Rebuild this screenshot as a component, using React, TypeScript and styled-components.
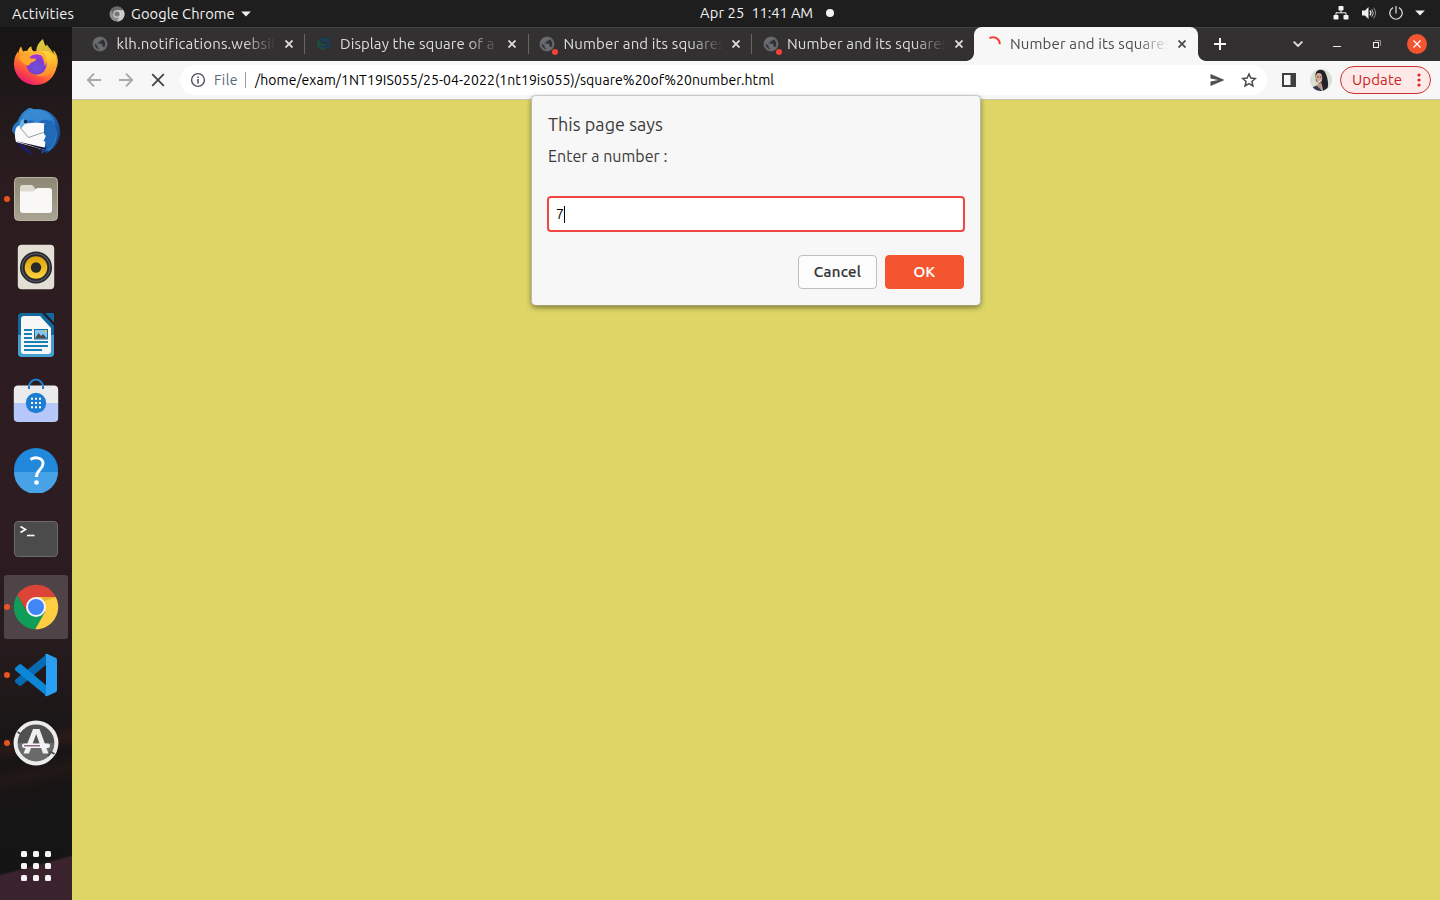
import React from "react";
import styled, { createGlobalStyle, css } from "styled-components";

const GlobalStyle = createGlobalStyle`
  *, *::before, *::after { box-sizing: border-box; }
  html, body { margin: 0; padding: 0; height: 100%; overflow: hidden; }
  body { font-family: "Ubuntu", "Noto Sans", "Open Sans", sans-serif; }
  button { font-family: inherit; padding: 0; margin: 0; border: 0; background: none; }
  svg { display: block; flex: none; }
`;

const Desktop = styled.div`
  display: grid;
  grid-template: 27px 873px / 72px 1368px;
  width: 1440px;
  height: 900px;
  overflow: hidden;
`;

/* ---------- Top bar ---------- */

const TopBar = styled.header`
  grid-column: 1 / -1;
  display: grid;
  grid-template-columns: 688px 1fr auto;
  align-items: center;
  background: #1e1e1e;
  color: #f2f2f2;
  font-size: 14.67px;
  line-height: 26px;
  padding: 0 15px 0 12px;
`;

const Label = styled.span<{ $track?: number }>`
  letter-spacing: ${(p) => p.$track ?? 0}px;
  white-space: pre;
`;

const BarLeft = styled.div`
  display: flex;
  align-items: center;
`;

const AppMenu = styled.div`
  display: flex;
  align-items: center;
  margin-left: 35px;
  gap: 6px;
`;

const Clock = styled.div`
  display: flex;
  align-items: center;
  gap: 7px;
  padding-bottom: 1px;
`;

const Dot = styled.i`
  width: 8px;
  height: 8px;
  border-radius: 50%;
  background: #f2f2f2;
  margin-left: 6px;
`;

const Tray = styled.div`
  display: flex;
  align-items: center;
  justify-content: flex-end;
  gap: 12px;
  padding-bottom: 1px;
`;

/* ---------- Dock ---------- */

const Dock = styled.nav`
  display: flex;
  flex-direction: column;
  align-items: center;
  gap: 4px;
  padding-top: 4px;
  background:
    linear-gradient(165deg, transparent 94.9%, #3b232d 95.2%),
    linear-gradient(168deg, transparent 80%, #2a1a1a 81.5%, #171414 83%, #211817 85%, #161414 87%, transparent 90%),
    linear-gradient(#171515 0, #241a1c 100px, #2c1c20 170px, #2d1c21 520px, #241a1c 640px, #171515 720px, #151414 100%);
`;

const DockItem = styled.div<{ $active?: boolean; $running?: boolean; $lift?: number }>`
  position: relative;
  display: flex;
  align-items: center;
  justify-content: center;
  width: 64px;
  height: 64px;
  padding-bottom: ${(p) => (p.$lift ?? 0) * 2}px;
  border-radius: 3px;
  background: ${(p) => (p.$active ? "#4e4447" : "transparent")};
  ${(p) =>
    p.$running &&
    css`
      &::before {
        content: "";
        position: absolute;
        left: 0;
        top: 29px;
        width: 6px;
        height: 6px;
        border-radius: 50%;
        background: #e95420;
      }
    `}
`;

const AppsButton = styled.div`
  display: grid;
  grid-template-columns: repeat(3, 6px);
  grid-auto-rows: 6px;
  gap: 6px;
  margin-top: auto;
  margin-bottom: 19px;
`;

const AppsDot = styled.i`
  border-radius: 1.5px;
  background: #f5f3f3;
`;

/* ---------- Browser ---------- */

const Browser = styled.main`
  position: relative;
  display: flex;
  flex-direction: column;
  background: #ded566;
`;

const TabStrip = styled.div`
  display: flex;
  align-items: stretch;
  height: 34px;
  padding-left: 8.9px;
  background: #333031;
  box-shadow: inset 0 1px #454243;
`;

const Tab = styled.div<{ $active?: boolean; $divider?: boolean }>`
  position: relative;
  display: flex;
  align-items: center;
  width: 223.5px;
  flex: none;
  padding: 0 7.5px 0 11.6px;
  color: ${(p) => (p.$active ? "#4a4a4a" : "#dedddd")};
  font-size: 15px;
  ${(p) =>
    p.$divider &&
    css`
      &::after {
        content: "";
        position: absolute;
        right: -0.9px;
        top: 7px;
        width: 1px;
        height: 20px;
        background: #666364;
      }
    `}
  ${(p) =>
    p.$active &&
    css`
      width: 224px;
      margin-left: -0.9px;
      padding: 0 8px 0 12px;
      background: #f7f7f7;
      border-radius: 8px 8px 0 0;
      &::before,
      &::after {
        content: "";
        position: absolute;
        bottom: 0;
        width: 8px;
        height: 8px;
      }
      &::before {
        right: 100%;
        background: radial-gradient(circle at 0 0, transparent 7.5px, #f7f7f7 8.2px);
      }
      &::after {
        left: 100%;
        background: radial-gradient(circle at 100% 0, transparent 7.5px, #f7f7f7 8.2px);
      }
    `}
`;

const Favicon = styled.div`
  position: relative;
  width: 16px;
  height: 16px;
  margin-right: 8px;
  flex: none;
`;

const AlertDot = styled.i`
  position: absolute;
  right: -3px;
  bottom: -3px;
  width: 6px;
  height: 6px;
  border-radius: 50%;
  background: #f44336;
`;

const TabTitle = styled.div<{ $track: number }>`
  flex: 1;
  overflow: hidden;
  white-space: nowrap;
  line-height: 24px;
  letter-spacing: ${(p) => p.$track}px;
  mask-image: linear-gradient(90deg, #000 calc(100% - 32px), transparent 100%);
`;

const TabClose = styled.button`
  display: flex;
  align-items: center;
  justify-content: center;
  width: 16px;
  height: 16px;
  margin-left: 5px;
  color: inherit;
`;

const StripButtons = styled.div`
  display: flex;
  flex: 1;
  align-items: center;
  padding: 0 13px 0 16px;
  color: #f4f4f4;
`;

const WindowControls = styled.div`
  display: flex;
  align-items: center;
  margin-left: auto;
`;

const WindowClose = styled.button`
  display: flex;
  align-items: center;
  justify-content: center;
  width: 20px;
  height: 20px;
  margin-left: 26px;
  border-radius: 50%;
  background: #f25530;
  color: #fff;
`;

const Toolbar = styled.div`
  display: flex;
  align-items: center;
  height: 39px;
  padding: 0 9px 1px 14px;
  background: #f7f7f7;
  border-bottom: 1px solid #c6c7b4;
`;

const NavButtons = styled.div`
  display: flex;
  gap: 16px;
`;

const Omnibox = styled.div`
  display: flex;
  align-items: center;
  width: 1087px;
  flex: none;
  height: 30px;
  margin-left: 14px;
  padding: 0 10px;
  border-radius: 15px;
  background: #fff;
  font-size: 14px;
`;

const Scheme = styled.span`
  margin-left: 8px;
  padding-right: 7px;
  border-right: 1px solid #9a9da1;
  color: #56687a;
  letter-spacing: 0.45px;
  line-height: 16px;
`;

const Url = styled.span`
  margin-left: 9px;
  color: #000;
  letter-spacing: 0.063px;
  white-space: nowrap;
`;

const OmniboxActions = styled.div`
  display: flex;
  gap: 16px;
  margin-left: auto;
`;

const ToolbarEnd = styled.div`
  display: flex;
  flex: 1;
  align-items: center;
  padding-left: 15px;
  gap: 14px;
`;

const UpdateButton = styled.button`
  display: flex;
  align-items: center;
  justify-content: space-between;
  width: 91px;
  height: 28px;
  margin-left: -6px;
  padding: 0 9px 0 11px;
  border: 1px solid #d32f2f;
  border-radius: 14px;
  background: #fce9e8;
  color: #cc2222;
  font-size: 15px;
  letter-spacing: 0.1px;
`;

/* ---------- Prompt dialog ---------- */

const Prompt = styled.section`
  position: absolute;
  left: 459px;
  top: 68px;
  width: 450px;
  height: 211px;
  display: flex;
  flex-direction: column;
  padding: 15px 15px 16px 16px;
  border: 1px solid #b9bbb5;
  border-top-color: #c6c8ca;
  border-bottom-color: #a7a36a;
  border-radius: 5px;
  background: #f7f7f7;
  box-shadow: 0 2px 5px rgba(60, 60, 20, 0.55);
  color: #3b3b3b;
`;

const PromptTitle = styled.h1`
  margin: 0;
  font-size: 18px;
  font-weight: 400;
  line-height: 26px;
  letter-spacing: 0.04px;
`;

const PromptMessage = styled.p`
  margin: 7px 0 0;
  font-size: 16px;
  line-height: 24px;
  letter-spacing: 0.04px;
`;

const PromptField = styled.div`
  display: flex;
  align-items: center;
  height: 36px;
  margin: 28px 0 0 -1px;
  padding: 0 8px 0 7px;
  border: 2px solid #f24440;
  border-radius: 4px;
  background: #fff;
  color: #000;
  font-size: 14px;
`;

const Caret = styled.i`
  width: 1px;
  height: 17px;
  background: #000;
`;

const PromptActions = styled.div`
  display: flex;
  justify-content: flex-end;
  gap: 8px;
  margin-top: auto;
  padding-right: 1px;
`;

const PromptButton = styled.button<{ $primary?: boolean }>`
  width: 79px;
  height: 34px;
  padding-bottom: 2px;
  border-radius: 4px;
  border: 1px solid ${(p) => (p.$primary ? "#f2552f" : "#bfbfbf")};
  background: ${(p) => (p.$primary ? "#f2552f" : "#fcfcfc")};
  color: ${(p) => (p.$primary ? "#fff" : "#333")};
  font-size: 15px;
  font-weight: 500;
  letter-spacing: 0.3px;
  -webkit-text-stroke: 0.2px currentColor;
`;

/* ---------- Small icons ---------- */

const Globe = () => (
  <svg width="16" height="16" viewBox="0.6 0.6 22.8 22.8">
    <path
      d="M12 2C6.480 2 2 6.480 2 12s4.480 10 10 10 10-4.480 10-10S17.520 2 12 2zm-1 17.930c-3.950-.49-7-3.850-7-7.930 0-.62.08-1.210.21-1.790L9 15v1c0 1.100.9 2 2 2v1.930zm6.900-2.540c-.26-.81-1-1.390-1.900-1.390h-1v-3c0-.55-.45-1-1-1H8v-2h2c.55 0 1-.45 1-1V7h2c1.100 0 2-.9 2-2v-.41c2.930 1.190 5 4.060 5 7.410 0 2.080-.8 3.970-2.100 5.390z"
      fill="#696d72"
      fillRule="nonzero"
      stroke="#696d72"
      strokeWidth="1"
    />
  </svg>
);

const StackIcon = () => (
  <svg width="16" height="16" viewBox="0 0 16 16" fill="none">
    <path d="M2.4 3.8 8.6 1.4 15 3.4 9 6.2Z" fill="#16405f" />
    <path d="M3 6.6 9 9.2 15 6.4M3 10 9 12.4 15 9.6" stroke="#16405f" strokeWidth="1.7" />
    <path d="M3.6 5C1 4.800 1 7.600 3.600 7.600L9 9.600M3.600 8.600C1 8.400 1 11.200 4 11.600L9 13.400" stroke="#1d5636" strokeWidth="1.200" />
  </svg>
);

const Spinner = () => (
  <svg width="16" height="16" viewBox="0 0 16 16" fill="none">
    <path d="M3.400 2.300A6.800 6.800 0 0 1 13.800 8.300" stroke="#f44336" strokeWidth="1.900" />
  </svg>
);

const Cross = ({ size = 8, width = 1.8 }: { size?: number; width?: number }) => (
  <svg width={size} height={size} viewBox="0 0 8 8" stroke="currentColor" strokeWidth={width}>
    <path d="M.5.5l7 7M7.500.5l-7 7" />
  </svg>
);

const Triangle = () => (
  <svg width="10" height="6" viewBox="0 0 10 6">
    <path d="M.2.5h9.600L5 5.500Z" fill="#f2f2f2" />
  </svg>
);

const ChromeMono = () => (
  <svg width="16" height="16" viewBox="0 0 16 16">
    <circle cx="8" cy="8" r="7.500" fill="#8d8d8d" />
    <path d="M1.500 4.250A7.500 7.500 0 0 1 14.500 4.250L8 4.400 4.900 9.800Z" fill="#686868" />
    <path d="M14.500 4.250A7.500 7.500 0 0 1 8 15.500L11.200 9.800 8 4.300Z" fill="#c9c9c9" />
    <circle cx="8" cy="8" r="3.700" fill="#e0e0e0" />
    <circle cx="8" cy="8" r="2.700" fill="#777" />
  </svg>
);

const ArrowLeft = ({ flip }: { flip?: boolean }) => (
  <svg width="16" height="16" viewBox="0 0 16 16" fill="none" stroke="#a9a9a9" strokeWidth="1.900">
    <path d={flip ? "M1 8h13M8 1.700 14.200 8 8 14.300" : "M15 8H2M8 1.700 1.800 8 8 14.300"} />
  </svg>
);

const StopIcon = () => (
  <svg width="16" height="16" viewBox="0 0 16 16" stroke="#434343" strokeWidth="1.800">
    <path d="M2.200 2.200l11.600 11.600M13.800 2.200 2.200 13.800" />
  </svg>
);

const InfoIcon = () => (
  <svg width="16" height="16" viewBox="0 0 16 16" fill="none">
    <circle cx="8" cy="8" r="6.400" stroke="#50555b" strokeWidth="1.400" />
    <path d="M8 7v4.500M8 4.500v1.600" stroke="#50555b" strokeWidth="1.600" />
  </svg>
);

const SendIcon = () => (
  <svg width="16" height="16" viewBox="0 0 16 16">
    <path d="M1.500 2 15.500 8 1.500 14V9.500L9.500 8 1.500 6.500Z" fill="#4f4f50" />
  </svg>
);

const StarIcon = () => (
  <svg width="16" height="16" viewBox="0 0 16 16" fill="none">
    <path
      d="M8 2l1.850 4.100 4.450.450-3.350 3 1 4.450L8 11.700 4.050 14l1-4.450-3.350-3 4.450-.450Z"
      stroke="#4a4a4b"
      strokeWidth="1.500"
    />
  </svg>
);

const SidePanelIcon = () => (
  <svg width="14" height="14" viewBox="0 0 14 14">
    <path d="M0 0h14v14H0ZM2 2v10h6.500V2Z" fill="#404041" fillRule="evenodd" />
  </svg>
);

const Avatar = () => (
  <svg width="22" height="22" viewBox="0 0 22 22">
    <defs>
      <clipPath id="avatar"><circle cx="11" cy="11" r="11" /></clipPath>
    </defs>
    <g clipPath="url(#avatar)">
      <path d="M0 0h22v22H0Z" fill="#dadfd0" />
      <path d="M5.500 6C5.500 .5 13 -1 15.200 3.500 17.500 8 19 15 17.500 19L13 22 11 16 6 12Z" fill="#232128" />
      <path d="M6.300 5.500C8 3.400 11 3.600 12 6.500 12.600 10 12 13.500 9.500 14.500 6.500 14 5.400 9 6.300 5.500Z" fill="#d3a793" />
      <path d="M7.500 15 11.500 14 13 20 6 22Z" fill="#c09588" />
      <path d="M2 18.500 6.500 16.500 12.500 22H2Z" fill="#343a58" />
      <path d="M7 8h1.600M9.800 8h1.500" stroke="#4b3434" strokeWidth=".9" />
      <path d="M8 11.800c.8 1 2 .8 2.700-.2" stroke="#fff" strokeWidth=".8" fill="none" />
    </g>
  </svg>
);

const MoreDots = () => (
  <svg width="4" height="14" viewBox="0 0 4 14" fill="#d02a2a">
    <circle cx="2" cy="2" r="1.600" />
    <circle cx="2" cy="7" r="1.600" />
    <circle cx="2" cy="12" r="1.600" />
  </svg>
);

const NetworkIcon = () => (
  <svg width="16" height="14" viewBox="0 0 16 14" fill="#f2f2f2">
    <rect x="5.500" y="0" width="5" height="4.500" rx=".8" />
    <rect x="0.500" y="9" width="5" height="4.500" rx=".8" />
    <rect x="10.500" y="9" width="5" height="4.500" rx=".8" />
    <path d="M8 4v3M3 9.500V6.800h10v2.700" fill="none" stroke="#f2f2f2" />
  </svg>
);

const VolumeIcon = () => (
  <svg width="16" height="14" viewBox="0 0 16 14" fill="none">
    <path d="M1 4.500h3L7.500 1v12L4 9.500H1Z" fill="#f2f2f2" />
    <path d="M9 4.700q1.800 2.300 0 4.600" stroke="#f2f2f2" strokeWidth="1.200" />
    <path d="M10.800 3.200q3 3.800 0 7.600" stroke="#c4c4c4" />
    <path d="M12.600 1.700q4 5.300 0 10.600" stroke="#8a8a8a" />
  </svg>
);

const PowerIcon = () => (
  <svg width="14" height="14" viewBox="0 0 14 14" fill="none" stroke="#e2e2e2" strokeWidth="1.200">
    <path d="M7 0v7.500M4 1.600a6.200 6.200 0 1 0 6 0" />
  </svg>
);

const PlusIcon = () => (
  <svg width="12" height="12" viewBox="0 0 12 12" stroke="currentColor" strokeWidth="2">
    <path d="M6 0v12M0 6h12" />
  </svg>
);

const TabSearchIcon = () => (
  <svg width="10" height="6" viewBox="0 0 10 6" fill="none" stroke="#dcdcdc" strokeWidth="1.900">
    <path d="M.6.6 5 5 9.400.6" />
  </svg>
);

const WindowGlyphs = styled.div`
  display: grid;
  grid-template-columns: 8px 8px;
  align-items: center;
  gap: 32px;
  margin-left: 30px;
`;

const MinimizeIcon = () => (
  <svg width="8" height="8" viewBox="0 0 8 8"><path d="M0 6h8v1H0Z" fill="#eee" /></svg>
);

const RestoreIcon = () => (
  <svg width="8" height="8" viewBox="0 0 8 8" fill="none">
    <path d="M2 .5h5.500V6" stroke="#8f8d8e" />
    <rect x=".5" y="2.500" width="5" height="5" stroke="#f4f4f4" />
  </svg>
);

/* ---------- Dock icons ---------- */

const FirefoxIcon = () => (
  <svg width="48" height="48" viewBox="0 0 48 48">
    <defs>
      <linearGradient id="ffBody" x1=".8" y1=".1" x2=".25" y2="1">
        <stop offset="0" stopColor="#ffe04a" />
        <stop offset=".35" stopColor="#ffa72b" />
        <stop offset=".65" stopColor="#ff5a36" />
        <stop offset="1" stopColor="#e8107c" />
      </linearGradient>
      <linearGradient id="ffTail" x1=".4" y1="0" x2=".6" y2="1">
        <stop offset="0" stopColor="#fff04c" />
        <stop offset=".6" stopColor="#ffc02d" />
        <stop offset="1" stopColor="#ff8a2f" />
      </linearGradient>
      <radialGradient id="ffGlobe" cx=".5" cy=".65" r=".6">
        <stop offset="0" stopColor="#6a55d8" />
        <stop offset=".6" stopColor="#7a3fd0" />
        <stop offset="1" stopColor="#ad33da" />
      </radialGradient>
    </defs>
    <path d="M9 8.500 11 13.500C12 13 14 12.600 15.500 12.800 16 10.500 17.500 9 19.500 8.500 19.200 10.500 20 12.200 21.500 13.200L36 13 44 18C48 32 39 47 24 47 11 47 1.500 37 2 25 2.100 20 4 16 6 13.500V16.500C6.500 13 7.500 10.500 9 8.500Z" fill="url(#ffBody)" />
    <path d="M31 1C26 5 24 9.500 24.500 14 31 14.500 35 20 34 27 32.500 34 27 37 21 35.500 29 41.500 42 38 45.500 27 47 21 44.500 15 41.500 12V15.500C39 11 37 10 35 6.500 34 9 33 8.500 31 1Z" fill="url(#ffTail)" opacity=".85" />
    <circle cx="24.500" cy="26.500" r="10.200" fill="url(#ffGlobe)" />
    <path d="M7.500 18.500C11 16.500 16 18 19 20.500L24 20.800C24.500 22.500 22 24 18.500 25 17.500 28 15 27.500 14 27 10 24 7.500 22 7.500 18.500Z" fill="#ffa62b" />
    <path d="M20.500 15C24 13.800 30 14 32.500 19L29.500 18.500C33 23 32 26 33 28 36 23 34 14 28 13.500 25 13 22 13.500 20.500 15Z" fill="#ffab2e" />
  </svg>
);

const ThunderbirdIcon = () => (
  <svg width="50" height="50" viewBox="0 0 50 50">
    <defs>
      <linearGradient id="tbBody" x1=".2" y1="0" x2=".8" y2="1">
        <stop offset="0" stopColor="#2e86cf" />
        <stop offset=".5" stopColor="#1d62b4" />
        <stop offset="1" stopColor="#153a78" />
      </linearGradient>
    </defs>
    <path d="M4 33C9 44 17 48 24 48.500L14 40.500Z" fill="#1b1f5f" />
    <path d="M15 4C18 1 21 2 23 3.500 38 1 49 12 49 26 49 36 43 44 34 48L36 45 30 48 31 42 28 44 14 21 4 29 1 25C1 21 3 18 6 16 8 12 11 6 15 4Z" fill="url(#tbBody)" />
    <path d="M18 4C32 1 43 8 44 20 38 12 30 12 25 19 23 12 16 13 12 19L10 16C11 9 14 6 18 4Z" fill="#3d93d6" opacity=".7" />
    <path d="M35 44C42 38 46 30 44 20 48 28 46 39 38 45Z" fill="#3487cf" opacity=".8" />
    <path d="M5 22C8 18.500 13 17.500 20 17 26 16.500 31 17 35.500 18L34 44 5 36C3.500 31 3.500 26 5 22Z" fill="#fafafa" />
    <path d="M9 21.500 17.500 31.500 35 25.500" fill="none" stroke="#8d9094" strokeWidth=".9" />
    <path d="M4.500 35 34 44 35 41 33 41.500Z" fill="#15143d" />
    <path d="M33 18.500 41 14 46 26 42 39 34 46 36 40 33.500 41.500 35 36 32.500 35 35 30 33 28Z" fill="#2269b7" />
    <path d="M12 13C15 14 15 18 12 20L10 23C8 20 8 15 12 13Z" fill="#6ab5e3" />
    <circle cx="14.500" cy="15.500" r="1.700" fill="#16294b" />
  </svg>
);

const FilesIcon = () => (
  <svg width="46" height="46" viewBox="0 0 46 46">
    <defs>
      <linearGradient id="files" x1="0" y1="0" x2="0" y2="1">
        <stop offset="0" stopColor="#8e8876" /><stop offset="1" stopColor="#a8a392" />
      </linearGradient>
    </defs>
    <rect x="1.500" y="1.500" width="43" height="43" rx="4" fill="url(#files)" stroke="#b9b5a4" />
    <path d="M7 12Q7 9 9.500 9H18Q20 9 21 11L22 13H36V20H7Z" fill="#dedacf" />
    <path d="M7 15.500H19Q21 15.500 22 14 23 12 25 12H36Q39 12 39 14.500V34Q39 37 36 37H10Q7 37 7 34Z" fill="#f9f8f6" />
  </svg>
);

const SpeakerIcon = () => (
  <svg width="38" height="46" viewBox="0 0 38 46">
    <defs>
      <linearGradient id="cone" x1="0" y1="0" x2="0" y2="1">
        <stop offset="0" stopColor="#dba30c" /><stop offset="1" stopColor="#fcd33b" />
      </linearGradient>
    </defs>
    <rect x=".8" y=".8" width="36.400" height="44.400" rx="4" fill="#e3dfd4" />
    <circle cx="19" cy="23.500" r="16" fill="#27272c" />
    <circle cx="19" cy="23.500" r="13.800" fill="none" stroke="#555661" strokeWidth="1.200" />
    <circle cx="19" cy="23.500" r="11.300" fill="url(#cone)" />
    <circle cx="19" cy="23.500" r="5.200" fill="#292929" />
  </svg>
);

const WriterIcon = () => (
  <svg width="38" height="46" viewBox="0 0 38 46">
    <path d="M1 5Q1 1 5 1H26L37 12V41Q37 45 33 45H5Q1 45 1 41Z" fill="#11699e" />
    <path d="M1 23H37V41Q37 45 33 45H5Q1 45 1 41Z" fill="#46a0cf" />
    <path d="M25 1H28L37 10.500V13.500Z" fill="#24191d" />
    <path d="M28 1H36Q37 1 37 2V10.500Z" fill="#11699e" />
    <path d="M4 7Q4 4 7 4H23L34 16V39Q34 42 31 42H7Q4 42 4 39Z" fill="#f7f7f7" />
    <path d="M7 18H15M7 22H15M7 26H15M7 30H31M7 34H31M7 38H25" stroke="#1a7fb4" strokeWidth="2" />
    <rect x="17.500" y="17.500" width="13" height="9.500" fill="#86c6ee" stroke="#1672a7" />
    <path d="M27 18h3v3Z" fill="#f4c62c" />
    <path d="M18 26.500 21.500 21 24 24 26 22 30 26.500Z" fill="#4a4a4a" />
  </svg>
);

const SoftwareIcon = () => (
  <svg width="46" height="48" viewBox="0 0 46 48">
    <path d="M16 13V11A7 7.500 0 0 1 30 11V13" fill="none" stroke="#2480d0" strokeWidth="2" />
    <path d="M.8 27V14Q.8 9.500 5 9.500H41Q45.200 9.500 45.200 14V27Z" fill="#ebebeb" />
    <path d="M.8 27H45.200V42Q45.200 46 41 46H5Q.8 46 .8 42Z" fill="#b6c8fa" />
    <path d="M16 13V9.500M30 13V9.500" stroke="#2480d0" strokeWidth="2" />
    <circle cx="23" cy="27" r="10.200" fill="#1c7dd2" />
    <path d="M18 22.800H20M22 22.800h2M26 22.800h2M18 27h2M22 27h2M26 27h2M18 31.200h2M22 31.200h2M26 31.200h2" stroke="#fff" strokeWidth="2" />
  </svg>
);

const HelpIcon = () => (
  <svg width="46" height="46" viewBox="0 0 46 46">
    <circle cx="23" cy="23" r="22" fill="#2089dc" />
    <path d="M1 25A22 22 0 0 0 45 25Z" fill="#47a3e6" />
    <path d="M17.500 12.500C22 9.500 30 10.500 30 16.500 30 22.500 23.500 22.500 23.500 30" fill="none" stroke="#fff" strokeWidth="2.900" />
    <circle cx="23.500" cy="35.500" r="2.300" fill="#fff" />
  </svg>
);

const TerminalIcon = () => (
  <svg width="46" height="38" viewBox="0 0 46 38">
    <rect x="1.500" y="1.500" width="43" height="35" rx="3.500" fill="#4b4b4b" stroke="#6b696a" />
    <path d="M7.500 6.500 12.500 9.500 7.500 12.500" fill="none" stroke="#fff" strokeWidth="1.600" />
    <path d="M14 15.500h7.500" stroke="#fff" strokeWidth="1.600" />
  </svg>
);

const ChromeIcon = () => (
  <svg width="46" height="46" viewBox="0 0 46 46">
    <path d="M23 23 4.100 11.500A22.200 22.200 0 0 1 42.600 12.500Z" fill="#db4437" />
    <path d="M4.300 11.100A22.200 22.200 0 0 0 22 45.200L32 28.500 14 28Z" fill="#0f9d58" />
    <path d="M23 13H42.800A22.200 22.200 0 0 1 22 45.200L32 28Z" fill="#ffcd40" />
    <path d="M28 13H42.800L42.500 13.800 31 17Z" fill="#c79a24" opacity=".5" />
    <path d="M4.300 11.100 13.800 27 17 18 6 9Z" fill="#db4437" />
    <path d="M13.500 27.500 23 33 31.500 28.500 22 45.200Z" fill="#0f9d58" />
    <circle cx="23" cy="23" r="10" fill="#f4f4f4" />
    <circle cx="23" cy="23" r="8" fill="#4285f4" />
  </svg>
);

const CodeIcon = () => (
  <svg width="44" height="44" viewBox="0 0 44 44">
    <path d="M1.500 26.500 33 1V11L8 32Q6.500 33.500 5 32.500L1.500 29.500Q0 28 1.500 26.500Z" fill="#086bb2" />
    <path d="M5 11.500Q6.500 10.500 8 12L33 33V42L32 42.500 1.500 17.500Q0 16 1.500 14.500Z" fill="#0c86d7" />
    <path d="M31 1.500Q32 .5 33.500 1L42 5Q43 5.500 43 7V37Q43 38.500 42 39L33.500 43Q32 43.500 31 42.500 32 42 32 40V4Q32 2 31 1.500Z" fill="#2ba0f2" />
  </svg>
);

const UpdaterIcon = () => (
  <svg width="46" height="46" viewBox="0 0 46 46">
    <circle cx="23" cy="23" r="20" fill="#6a6a6a" />
    <path d="M4 23A19 19 0 0 1 42 23Z" fill="#515151" />
    <circle cx="23" cy="23" r="20.400" fill="none" stroke="#ececec" strokeWidth="4" />
    <path d="M4.500 12 8 14 11 10M41.500 34 38 32 35 36" fill="none" stroke="#4d4d4d" strokeWidth="2" />
    <path d="M10.500 33.500 20 9H26.500L35.500 33.500H30L23.200 14 16 33.500Z" fill="#efefef" />
    <rect x="9" y="23.500" width="28" height="4.500" rx="2.200" fill="#f4f4f4" />
    <path d="M11 25.800H27" stroke="#76436b" strokeWidth="1.200" />
  </svg>
);

/* ---------- Data ---------- */

const dockApps = [
  { id: "firefox", icon: <FirefoxIcon />, lift: 1 },
  { id: "thunderbird", icon: <ThunderbirdIcon /> },
  { id: "files", icon: <FilesIcon />, running: true },
  { id: "rhythmbox", icon: <SpeakerIcon /> },
  { id: "writer", icon: <WriterIcon /> },
  { id: "software", icon: <SoftwareIcon />, lift: 3 },
  { id: "help", icon: <HelpIcon />, lift: 1 },
  { id: "terminal", icon: <TerminalIcon /> },
  { id: "chrome", icon: <ChromeIcon />, running: true, active: true },
  { id: "code", icon: <CodeIcon />, running: true },
  { id: "updater", icon: <UpdaterIcon />, running: true },
];

const tabs = [
  { title: "klh.notifications.website", track: 0.15, icon: <Globe />, divider: true },
  { title: "Display the square of a given", track: 0.08, icon: <StackIcon />, divider: true },
  { title: "Number and its squares", track: 0.13, icon: <Globe />, alert: true, divider: true },
  { title: "Number and its squares", track: 0.13, icon: <Globe />, alert: true },
  { title: "Number and its squares", track: 0.13, icon: <Spinner />, active: true },
];

export default function App() {
  return (
    <>
      <GlobalStyle />
      <Desktop>
        <TopBar>
          <BarLeft>
            <Label $track={0.2}>Activities</Label>
            <AppMenu>
              <ChromeMono />
              <Label $track={0.06}>Google Chrome</Label>
              <Triangle />
            </AppMenu>
          </BarLeft>
          <Clock>
            <Label $track={0.15}>Apr 25</Label>
            <Label $track={-0.1}>11:41 AM</Label>
            <Dot />
          </Clock>
          <Tray>
            <NetworkIcon />
            <VolumeIcon />
            <PowerIcon />
            <Triangle />
          </Tray>
        </TopBar>

        <Dock>
          {dockApps.map((app) => (
            <DockItem key={app.id} $active={app.active} $running={app.running} $lift={app.lift}>
              {app.icon}
            </DockItem>
          ))}
          <AppsButton>
            {Array.from({ length: 9 }, (_, i) => (
              <AppsDot key={i} />
            ))}
          </AppsButton>
        </Dock>

        <Browser>
          <TabStrip>
            {tabs.map((tab, i) => (
              <Tab key={i} $active={tab.active} $divider={tab.divider}>
                <Favicon>
                  {tab.icon}
                  {tab.alert && <AlertDot />}
                </Favicon>
                <TabTitle $track={tab.track}>{tab.title}</TabTitle>
                <TabClose><Cross /></TabClose>
              </Tab>
            ))}
            <StripButtons>
              <PlusIcon />
              <WindowControls>
                <TabSearchIcon />
                <WindowGlyphs>
                  <MinimizeIcon />
                  <RestoreIcon />
                </WindowGlyphs>
                <WindowClose><Cross width={1.3} /></WindowClose>
              </WindowControls>
            </StripButtons>
          </TabStrip>

          <Toolbar>
            <NavButtons>
              <ArrowLeft />
              <ArrowLeft flip />
              <StopIcon />
            </NavButtons>
            <Omnibox>
              <InfoIcon />
              <Scheme>File</Scheme>
              <Url>/home/exam/1NT19IS055/25-04-2022(1nt19is055)/square%20of%20number.html</Url>
              <OmniboxActions>
                <SendIcon />
                <StarIcon />
              </OmniboxActions>
            </Omnibox>
            <ToolbarEnd>
              <SidePanelIcon />
              <Avatar />
              <UpdateButton>
                Update
                <MoreDots />
              </UpdateButton>
            </ToolbarEnd>
          </Toolbar>

          <Prompt>
            <PromptTitle>This page says</PromptTitle>
            <PromptMessage>Enter a number :</PromptMessage>
            <PromptField>
              7<Caret />
            </PromptField>
            <PromptActions>
              <PromptButton>Cancel</PromptButton>
              <PromptButton $primary>OK</PromptButton>
            </PromptActions>
          </Prompt>
        </Browser>
      </Desktop>
    </>
  );
}
